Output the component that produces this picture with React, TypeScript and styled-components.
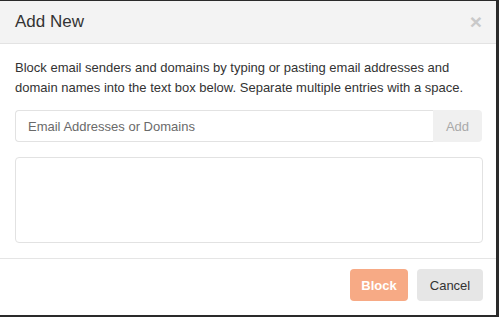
import React from "react";
import styled, { createGlobalStyle } from "styled-components";

const Global = createGlobalStyle`
  html, body { margin: 0; padding: 0; background: #2a2a2a; }
  body { font-family: "Liberation Sans", Arial, sans-serif; }
  * { box-sizing: border-box; }
`;

const Backdrop = styled.div`
  width: 499px;
  height: 317px;
  padding-top: 1px;
  background: #2a2a2a;
  overflow: hidden;
`;

const Modal = styled.div`
  width: 496px;
  height: 314px;
  background: #fff;
  display: flex;
  flex-direction: column;
  color: #333;
`;

const Header = styled.div`
  height: 43px;
  flex: none;
  display: flex;
  align-items: center;
  justify-content: space-between;
  padding: 0 14px 1px 15px;
  background: #f3f3f3;
  border-bottom: 1px solid #e3e3e3;
`;

const Title = styled.h4`
  margin: 0;
  font-size: 17px;
  font-weight: normal;
  color: #333;
`;

const Close = styled.button`
  border: 0;
  background: none;
  padding: 0;
  font-family: "Liberation Sans", Arial, sans-serif;
  font-size: 21px;
  font-weight: bold;
  line-height: 1;
  color: #c9c9c9;
  cursor: pointer;
`;

const Body = styled.div`
  flex: none;
  padding: 14px 14px 15px 15px;
  border-bottom: 1px solid #e5e5e5;
  display: flex;
  flex-direction: column;
`;

const Text = styled.p`
  margin: 0 0 12px;
  font-size: 13px;
  line-height: 20px;
  color: #333;
`;

const InputGroup = styled.div`
  display: flex;
  height: 32px;
  margin-bottom: 15px;
`;

const Input = styled.input`
  flex: 1;
  height: 32px;
  border: 1px solid #e2e2e2;
  border-right: 0;
  border-radius: 4px 0 0 4px;
  padding: 0 12px;
  font-family: "Liberation Sans", Arial, sans-serif;
  font-size: 13px;
  color: #333;
  outline: none;
  &::placeholder { color: #6a6a6a; }
`;

const AddButton = styled.button`
  width: 49px;
  height: 32px;
  border: 0;
  border-radius: 0 4px 4px 0;
  background: #f0f0f0;
  color: #a9a9a9;
  font-family: "Liberation Sans", Arial, sans-serif;
  font-size: 13px;
`;

const Area = styled.textarea`
  width: 468px;
  height: 86px;
  border: 1px solid #e2e2e2;
  border-radius: 4px;
  resize: none;
  outline: none;
  margin: 0;
  display: block;
`;

const Footer = styled.div`
  display: flex;
  justify-content: flex-end;
  gap: 9px;
  padding: 10px 13px 0 0;
`;

const Btn = styled.button<{ $primary?: boolean }>`
  height: 32px;
  border: 0;
  border-radius: 4px;
  padding: 0;
  font-family: "Liberation Sans", Arial, sans-serif;
  font-size: 13px;
  font-weight: ${(p) => (p.$primary ? "bold" : "normal")};
  background: ${(p) => (p.$primary ? "#f7aa85" : "#e6e6e6")};
  color: ${(p) => (p.$primary ? "#fff" : "#333")};
  width: ${(p) => (p.$primary ? "58px" : "66px")};
`;

export default function App() {
  return (
    <>
      <Global />
      <Backdrop>
        <Modal>
          <Header>
            <Title>Add New</Title>
            <Close>×</Close>
          </Header>
          <Body>
            <Text>
              Block email senders and domains by typing or pasting email addresses and
              domain names into the text box below. Separate multiple entries with a space.
            </Text>
            <InputGroup>
              <Input placeholder="Email Addresses or Domains" />
              <AddButton>Add</AddButton>
            </InputGroup>
            <Area />
          </Body>
          <Footer>
            <Btn $primary>Block</Btn>
            <Btn>Cancel</Btn>
          </Footer>
        </Modal>
      </Backdrop>
    </>
  );
}
